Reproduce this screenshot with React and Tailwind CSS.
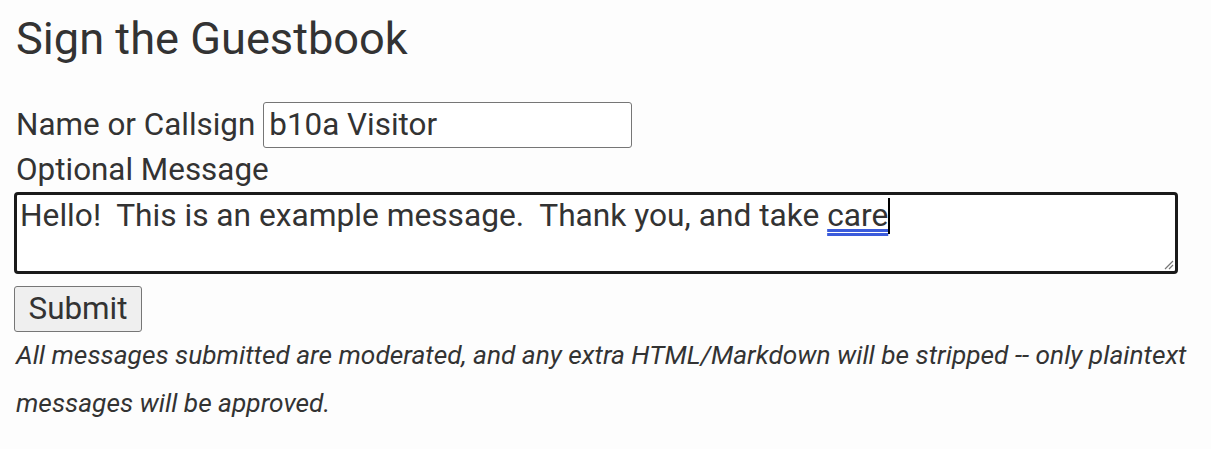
export default function App() {
  return (
    <div className="min-h-[449px] bg-[#fdfdfd] text-[#333] px-[16px] pt-[11px]" style={{ fontFamily: "Roboto, sans-serif" }}>
      <h1 className="text-[45.2px] leading-[56px] font-normal mb-[35px]">Sign the Guestbook</h1>
      <div className="flex items-center">
        <label className="text-[31.4px] leading-[46px] mr-[8px]">Name or Callsign</label>
        <div className="w-[369px] h-[46px] border border-[#767676] rounded-[3px] bg-white flex items-center px-[5px] text-[31.4px]">b10a Visitor</div>
      </div>
      <div className="text-[31.4px] leading-[44px]">Optional Message</div>
      <div className="relative -ml-[2px] w-[1164px] h-[82px] border-[3px] border-[#1a1a1a] rounded-[4px] bg-white px-[3px] pt-[3px] text-[31.7px] leading-[36px]">
        <span>Hello!&nbsp; This is an example message.&nbsp; Thank you, and take </span>
        <span className="underline decoration-[#3b5bdb] decoration-double underline-offset-[3px]">care</span>
        <span className="inline-block w-[2px] h-[36px] bg-black align-top"></span>
        <svg className="absolute right-[1px] bottom-[1px]" width="12" height="12" viewBox="0 0 12 12">
          <path d="M11 3 L3 11 M11 7 L7 11" stroke="#777" strokeWidth="1.2" />
        </svg>
      </div>
      <button className="mt-[12px] -ml-[2px] h-[46px] px-[13.5px] bg-[#efefef] border border-[#767676] rounded-[3px] text-[31.4px] leading-[40px]">Submit</button>
      <p className="italic text-[26.3px] leading-[48px] -mt-[1px]">All messages submitted are moderated, and any extra HTML/Markdown will be stripped -- only plaintext messages will be approved.</p>
    </div>
  );
}
